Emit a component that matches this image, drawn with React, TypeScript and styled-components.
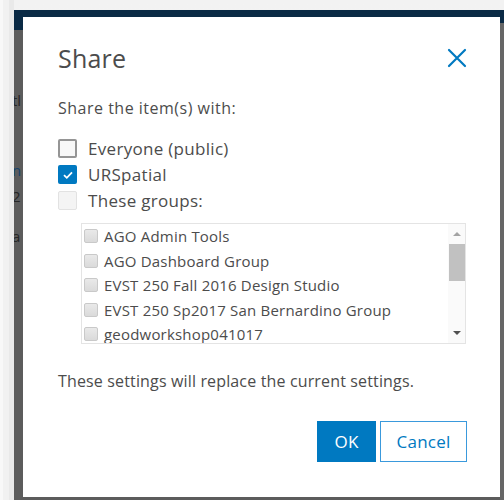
import React from "react";
import styled, { createGlobalStyle } from "styled-components";

const Global = createGlobalStyle`
  html, body { margin: 0; padding: 0; }
  body {
    background: #f4f4f4;
    font-family: "Open Sans", "Liberation Sans", sans-serif;
    width: 504px;
    height: 500px;
    overflow: hidden;
  }
`;

const Page = styled.div`
  display: flex;
  width: 504px;
  height: 500px;
  padding: 10px 0 0 14px;
  box-sizing: border-box;
  background: linear-gradient(to right, #f8f8f8 0 3px, #f1f1f1 3px 9px, #e9e9e9 9px 14px, transparent 14px),
    linear-gradient(to bottom, #f2f2f2, #f6f6f6);
`;

const Backdrop = styled.div`
  flex: 1;
  display: flex;
  padding-top: 7px;
  background: linear-gradient(to bottom, #0a2a45 0 20px, #5c5c5c 20px);
`;

/* the page underneath, dimmed by the modal backdrop */
const Peek = styled.div`
  width: 9px;
  overflow: hidden;
  display: flex;
  flex-direction: column;
  font-size: 15px;
  white-space: nowrap;
`;

const PeekLine = styled.span<{ $gap: number; $blue?: boolean }>`
  margin-top: ${(p) => p.$gap}px;
  line-height: 18px;
  margin-left: -2px;
  color: ${(p) => (p.$blue ? "#17426a" : "#262626")};
`;

const Dialog = styled.div`
  width: 477px;
  height: 480px;
  background: #fff;
  box-sizing: border-box;
  padding: 24px 33px 0 35px;
  display: flex;
  flex-direction: column;
  color: #4c4c4c;
`;

const Header = styled.div`
  display: flex;
  align-items: center;
  justify-content: space-between;
  height: 34px;
`;

const Title = styled.h2`
  margin: 0;
  font-weight: 400;
  font-size: 25px;
  color: #4c4c4c;
  letter-spacing: 0.2px;
`;

const Close = styled.button`
  border: 0;
  background: none;
  padding: 0;
  width: 20px;
  height: 20px;
  display: flex;
  cursor: pointer;
`;

const Text = styled.p<{ $top: number; $track: number }>`
  margin: ${(p) => p.$top}px 0 0;
  font-size: 16px;
  letter-spacing: ${(p) => p.$track}px;
  line-height: 20px;
`;

const Options = styled.div`
  margin-top: 21px;
  display: flex;
  flex-direction: column;
  gap: 7px;
`;

const Option = styled.label`
  display: flex;
  align-items: center;
  gap: 11px;
  font-size: 17px;
  letter-spacing: 0.3px;
  line-height: 19px;
  color: #4c4c4c;
`;

const Box = styled.span<{ $state: "off" | "on" | "disabled" }>`
  width: 19px;
  height: 19px;
  box-sizing: border-box;
  border-radius: 2px;
  display: flex;
  align-items: center;
  justify-content: center;
  border: ${(p) =>
    p.$state === "on" ? "none" : p.$state === "off" ? "2px solid #959595" : "1px solid #e2e2e2"};
  background: ${(p) => (p.$state === "on" ? "#0079c1" : p.$state === "off" ? "#f8f8f8" : "#f4f4f4")};
`;

const GroupList = styled.div`
  margin: 13px 0 0 23px;
  width: 385px;
  height: 121px;
  box-sizing: border-box;
  border: 1px solid #e4e4e4;
  display: flex;
`;

const Rows = styled.div`
  flex: 1;
  padding: 3px 0 0 2px;
  display: flex;
  flex-direction: column;
  gap: 6.5px;
  overflow: hidden;
`;

const Row = styled.div`
  display: flex;
  align-items: center;
  gap: 6px;
  height: 18px;
  line-height: 18px;
  font-size: 15px;
  letter-spacing: 0.2px;
  color: #4c4c4c;
  white-space: nowrap;
`;

const SmallBox = styled.span`
  width: 14px;
  height: 14px;
  box-sizing: border-box;
  border-radius: 2px;
  border: 1px solid #c9c9c9;
  background: linear-gradient(#e9e9e9, #dadada);
`;

const Scrollbar = styled.div`
  width: 17px;
  display: flex;
  flex-direction: column;
  align-items: center;
  background: #fafafa;
`;

const Arrow = styled.span<{ $down?: boolean }>`
  height: 14px;
  display: flex;
  align-items: center;
  justify-content: center;
  margin-top: ${(p) => (p.$down ? "auto" : "3px")};
  margin-bottom: ${(p) => (p.$down ? "3px" : "0")};
  &::before {
    content: "";
    border-left: 4px solid transparent;
    border-right: 4px solid transparent;
    ${(p) => (p.$down ? "border-top: 4px solid #505050;" : "border-bottom: 4px solid #a3a3a3;")}
  }
`;

const Thumb = styled.span`
  width: 16px;
  height: 37px;
  margin-top: 3px;
  background: #c1c1c1;
`;

const Actions = styled.div`
  margin-top: 30px;
  display: flex;
  justify-content: flex-end;
  gap: 4px;
`;

const Btn = styled.button<{ $primary?: boolean }>`
  width: ${(p) => (p.$primary ? "59px" : "87px")};
  height: 41px;
  box-sizing: border-box;
  padding: 0;
  font-family: inherit;
  font-size: 17px;
  letter-spacing: 0.2px;
  border: 1px solid ${(p) => (p.$primary ? "#0079c1" : "#3a99dc")};
  background: ${(p) => (p.$primary ? "#0079c1" : "#fff")};
  color: ${(p) => (p.$primary ? "#fff" : "#0079c1")};
  cursor: pointer;
`;

const RightEdge = styled.div`
  width: 4px;
  background: linear-gradient(to bottom, #0a2a45 0 13px, #666 13px);
  margin-top: -7px;
`;

const groups = [
  "AGO Admin Tools",
  "AGO Dashboard Group",
  "EVST 250 Fall 2016 Design Studio",
  "EVST 250 Sp2017 San Bernardino Group",
  "geodworkshop041017",
];

export default function App() {
  return (
    <>
      <Global />
      <Page>
        <Backdrop>
          <Peek aria-hidden>
            <PeekLine $gap={74}>tl</PeekLine>
            <PeekLine $gap={52} $blue>n</PeekLine>
            <PeekLine $gap={8}>2</PeekLine>
            <PeekLine $gap={22}>a</PeekLine>
          </Peek>
          <Dialog>
            <Header>
              <Title>Share</Title>
              <Close aria-label="Close">
                <svg width="20" height="20" viewBox="0 0 20 20">
                  <path d="M2 2 L18 18 M18 2 L2 18" stroke="#0079c1" strokeWidth="2.2" strokeLinecap="round" />
                </svg>
              </Close>
            </Header>
            <Text $top={23} $track={0.5}>Share the item(s) with:</Text>
            <Options>
              <Option>
                <Box $state="off" />
                Everyone (public)
              </Option>
              <Option>
                <Box $state="on">
                  <svg width="12" height="10" viewBox="0 0 12 10">
                    <path d="M2 5.2 L4.8 7.8 L10 2.4" stroke="#fff" strokeWidth="1.8" fill="none" />
                  </svg>
                </Box>
                URSpatial
              </Option>
              <Option>
                <Box $state="disabled" />
                These groups:
              </Option>
            </Options>
            <GroupList>
              <Rows>
                {groups.map((g) => (
                  <Row key={g}>
                    <SmallBox />
                    {g}
                  </Row>
                ))}
              </Rows>
              <Scrollbar>
                <Arrow />
                <Thumb />
                <Arrow $down />
              </Scrollbar>
            </GroupList>
            <Text $top={27} $track={0.15}>These settings will replace the current settings.</Text>
            <Actions>
              <Btn $primary>OK</Btn>
              <Btn>Cancel</Btn>
            </Actions>
          </Dialog>
          <RightEdge />
        </Backdrop>
      </Page>
    </>
  );
}
